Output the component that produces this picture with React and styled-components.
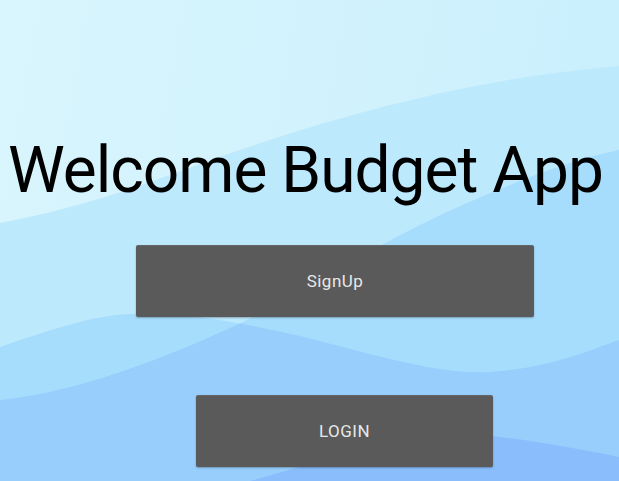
import React from 'react';
import styled, { createGlobalStyle } from 'styled-components';

const GlobalStyle = createGlobalStyle`
  html, body {
    margin: 0;
    padding: 0;
    overflow: hidden;
  }
  body {
    font-family: Roboto, "Liberation Sans", sans-serif;
  }
`;

const Screen = styled.div`
  position: relative;
  width: 619px;
  height: 481px;
  overflow: hidden;
  background: linear-gradient(100deg, #d9f5fd 0%, #d0f2fd 55%, #c8effd 100%);
`;

const Waves = styled.svg`
  position: absolute;
  inset: 0;
  width: 100%;
  height: 100%;
  z-index: 0;
`;

const Content = styled.div`
  position: relative;
  z-index: 1;
  display: flex;
  flex-direction: column;
  align-items: flex-start;
  padding-top: 133px;
`;

const Title = styled.h1`
  margin: 0;
  padding-left: 8px;
  font-family: Roboto, "Liberation Sans", sans-serif;
  font-weight: 400;
  font-size: 64px;
  line-height: 75px;
  letter-spacing: -1px;
  color: #000;
  white-space: nowrap;
`;

const ActionButton = styled.button`
  display: flex;
  align-items: center;
  justify-content: center;
  margin-top: ${p => p.$top}px;
  margin-left: ${p => p.$left}px;
  width: ${p => p.$width}px;
  height: 72px;
  padding: 0;
  border: none;
  border-radius: 2px;
  background: #5a5a5a;
  color: #e8e8e8;
  font-family: Roboto, "Liberation Sans", sans-serif;
  font-size: 17px;
  font-weight: 400;
  letter-spacing: 0.5px;
  box-shadow: 0 1px 2px rgba(0, 0, 0, 0.28), inset 0 1px 0 rgba(255, 255, 255, 0.08);
  cursor: pointer;
`;

const WaveLayer = styled.path`
  fill: ${p => p.$fill};
`;

const waveA = 'M0,223 C70,210 130,190 200,164 C300,128 450,80 619,66 L619,481 L0,481 Z';
const waveC = 'M0,400 C80,392 170,356 243,322 C300,292 380,242 460,206 C520,180 570,160 619,150 L619,481 L0,481 Z';
const waveB = 'M0,347 C50,330 90,316 130,314 C180,312 230,320 300,336 C380,356 440,375 490,372 C550,368 590,350 619,340 L619,481 L0,481 Z';
const waveD = 'M250,481 C300,468 380,440 434,434 C480,431 560,445 619,457 L619,481 Z';

const Background = () => (
  <Waves viewBox="0 0 619 481" preserveAspectRatio="none">
    <defs>
      <clipPath id="clip-c">
        <path d={waveC} />
      </clipPath>
    </defs>
    <WaveLayer d={waveA} $fill="#bde9fd" />
    <WaveLayer d={waveC} $fill="#a6ddfd" />
    <WaveLayer d={waveB} $fill="#a6ddfd" />
    <WaveLayer d={waveB} $fill="#97cefc" clipPath="url(#clip-c)" />
    <WaveLayer d={waveD} $fill="#89bdfb" />
  </Waves>
);

export default function App() {
  return (
    <>
      <GlobalStyle />
      <Screen>
        <Background />
        <Content>
          <Title>Welcome Budget App</Title>
          <ActionButton $top={37} $left={136} $width={398}>SignUp</ActionButton>
          <ActionButton $top={78} $left={196} $width={297}>LOGIN</ActionButton>
        </Content>
      </Screen>
    </>
  );
}
